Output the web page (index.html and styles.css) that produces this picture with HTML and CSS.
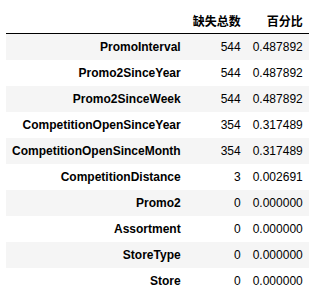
FILE: index.html
```html
<!DOCTYPE html>
<html>
<head>
<meta charset="utf-8">
<link rel="stylesheet" href="styles.css">
</head>
<body>
<table class="df">
  <thead>
    <tr><th></th><th>缺失总数</th><th>百分比</th></tr>
  </thead>
  <tbody>
    <tr><th>PromoInterval</th><td>544</td><td>0.487892</td></tr>
    <tr><th>Promo2SinceYear</th><td>544</td><td>0.487892</td></tr>
    <tr><th>Promo2SinceWeek</th><td>544</td><td>0.487892</td></tr>
    <tr><th>CompetitionOpenSinceYear</th><td>354</td><td>0.317489</td></tr>
    <tr><th>CompetitionOpenSinceMonth</th><td>354</td><td>0.317489</td></tr>
    <tr><th>CompetitionDistance</th><td>3</td><td>0.002691</td></tr>
    <tr><th>Promo2</th><td>0</td><td>0.000000</td></tr>
    <tr><th>Assortment</th><td>0</td><td>0.000000</td></tr>
    <tr><th>StoreType</th><td>0</td><td>0.000000</td></tr>
    <tr><th>Store</th><td>0</td><td>0.000000</td></tr>
  </tbody>
</table>
</body>
</html>
```
FILE: styles.css
```css
html, body {
  margin: 0;
  padding: 0;
  background: #fff;
}
body {
  padding: 8px 0 0 6px;
  font-family: "Liberation Sans", Arial, "Noto Sans CJK SC", sans-serif;
  font-size: 12px;
  color: #000;
}
.df {
  border-collapse: collapse;
  border-spacing: 0;
  border: none;
  table-layout: auto;
}
.df th,
.df td {
  padding: 0 6px;
  height: 26px;
  line-height: 14px;
  text-align: right;
  vertical-align: middle;
  white-space: nowrap;
  border: none;
}
.df thead th {
  font-weight: bold;
  font-family: "Noto Sans CJK SC", "Liberation Sans", sans-serif;
  border-bottom: 1px solid #000;
  height: 25px;
}
.df tbody th {
  font-weight: bold;
}
.df tbody tr:nth-child(odd) {
  background: #f5f5f5;
}
.df td {
  min-width: 0;
}
```
